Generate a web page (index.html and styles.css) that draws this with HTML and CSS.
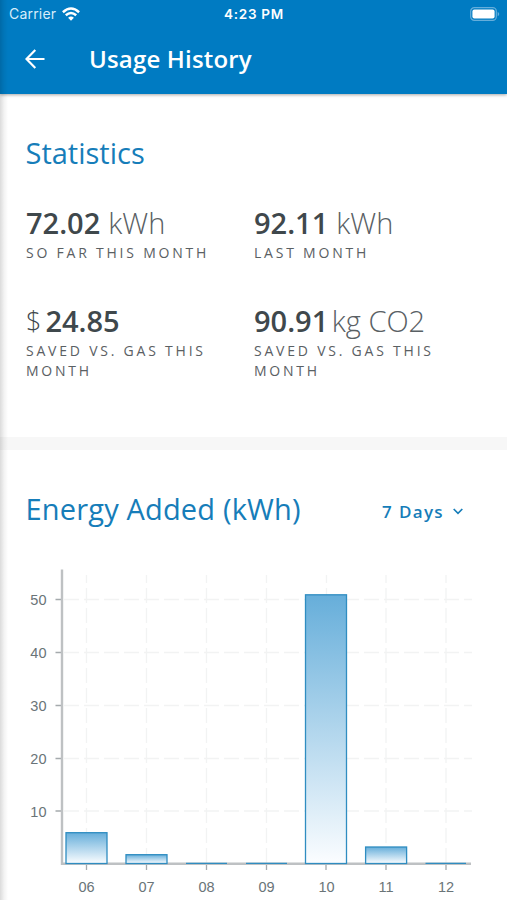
FILE: index.html
```
<!DOCTYPE html>
<html lang="en">
<head>
<meta charset="utf-8">
<title>Usage History</title>
<link rel="stylesheet" href="styles.css">
</head>
<body>
<div class="screen">
  <header class="header">
    <div class="status">
      <div class="carrier"><span>Carrier</span>
        <svg class="wifi" width="18" height="14" viewBox="0 0 18 14" fill="none" stroke="#fff" stroke-width="2.5"><path d="M.9 5.2Q9-2.1 17.1 5.2M3.8 8.3Q9 3.7 14.2 8.3"/><path d="M9 13.800 6.100 10.800Q9 8.400 11.900 10.800Z" fill="#fff" stroke="none"/></svg>
      </div>
      <span class="time">4:23 PM</span>
      <svg class="battery" width="30" height="14" viewBox="0 0 30 14"><rect x=".7" y=".7" width="25.600" height="12.600" rx="3.600" fill="none" stroke="#65aedb" stroke-width="1.200"/><rect x="2.400" y="2.400" width="22.200" height="9.200" rx="2" fill="#fff"/><path d="M27.700 4.700Q30.800 7 27.700 9.300Z" fill="#65aedb"/></svg>
    </div>
    <div class="appbar">
      <svg class="back" width="20" height="20" viewBox="0 0 20 20" fill="none" stroke="#fff" stroke-width="2.200"><path d="M19.500 10H1.800M10.300 1.100 1.500 10l8.800 8.900"/></svg>
      <h1>Usage History</h1>
    </div>
  </header>
  <main>
    <section class="stats">
      <h2>Statistics</h2>
      <div class="grid">
        <div class="stat"><p class="value"><b>72.02</b><span class="unit spaced">kWh</span></p><p class="label">SO FAR THIS MONTH</p></div>
        <div class="stat"><p class="value"><b>92.11</b><span class="unit spaced">kWh</span></p><p class="label">LAST MONTH</p></div>
        <div class="stat"><p class="value"><span class="currency">$</span><b>24.85</b></p><p class="label">SAVED VS. GAS THIS<br>MONTH</p></div>
        <div class="stat"><p class="value"><b>90.91</b><span class="unit">kg CO2</span></p><p class="label">SAVED VS. GAS THIS<br>MONTH</p></div>
      </div>
    </section>
    <section class="energy">
      <div class="energy-head">
        <h2>Energy Added (kWh)</h2>
        <div class="range"><span>7 Days</span><svg width="10" height="7" viewBox="0 0 10 7" fill="none" stroke="#167db9" stroke-width="1.700"><path d="M.7 1 5 5.300 9.300 1"/></svg></div>
      </div>
      <svg class="chart" width="507" height="350" viewBox="0 550 507 350">
        <defs><linearGradient id="bar" x1="0" y1="0" x2="0" y2="1"><stop offset="0" stop-color="#66aeda"/><stop offset="1" stop-color="#fbfdff"/></linearGradient></defs>
        <g class="gridlines">
          <path d="M64 599.500H472M64 652.500H472M64 705.500H472M64 758.500H472M64 811H472"/>
          <path d="M86.500 863V575M146.500 863V575M206.500 863V575M266.500 863V575M326.500 863V575M386 863V575M446 863V575"/>
        </g>
        <path class="ticks" d="M55.500 599.500H62M55.500 652.500H62M55.500 705.500H62M55.500 758.500H62M55.500 811H62M86.500 864V870M146.500 864V870M206.500 864V870M266.500 864V870M326 864V870M386 864V870M446 864V870"/>
        <path class="axis" d="M62 569.500V863.700H471"/>
        <g class="bars">
          <rect x="66" y="832.700" width="41" height="30.800"/>
          <rect x="126" y="854.700" width="41" height="8.800"/>
          <rect x="305.500" y="594.800" width="41" height="268.700"/>
          <rect x="365.600" y="847" width="41" height="16.500"/>
          <path d="M186 863.400H227M246 863.400H287M425.500 863.400H466"/>
        </g>
        <g class="y-labels"><text x="46.500" y="605">50</text><text x="46.500" y="658">40</text><text x="46.500" y="711">30</text><text x="46.500" y="763.500">20</text><text x="46.500" y="816.500">10</text></g>
        <g class="x-labels"><text x="86.500" y="892">06</text><text x="146.500" y="892">07</text><text x="206.500" y="892">08</text><text x="266.500" y="892">09</text><text x="326.500" y="892">10</text><text x="386" y="892">11</text><text x="446" y="892">12</text></g>
      </svg>
    </section>
  </main>
  <div class="edge-shadow"></div>
</div>
</body>
</html>
```
FILE: styles.css
```
* { box-sizing: border-box; }
body, h1, h2, p { margin: 0; }
body { background: #fff; font-family: "Open Sans", sans-serif; overflow: hidden; }
svg { display: block; flex: none; }
.screen { position: relative; width: 507px; height: 900px; overflow: hidden; }
.header { height: 94px; background: #007bc2; color: #fff; box-shadow: 0 1px 3px rgba(0,0,0,.35); position: relative; }
.status { height: 28px; display: grid; grid-template-columns: 1fr auto 1fr; align-items: center; padding: 0 7px 0 9px; font: 14px/28px Inter, sans-serif; }
.carrier { display: flex; gap: 6px; align-items: center; letter-spacing: .2px; }
.carrier span { color: #d7edfa; }
.time { font-weight: 600; font-size: 13.5px; letter-spacing: .7px; margin-left: -1px; }
.battery { justify-self: end; }
.appbar { display: flex; align-items: center; height: 62px; padding-left: 25px; gap: 44px; }
h1 { font-size: 24px; line-height: 32px; font-weight: 600; letter-spacing: .18px; }
h2 { color: #167db9; font-size: 29px; line-height: 40px; font-weight: 400; white-space: nowrap; margin-left: -.5px; }
.stats { height: 356px; padding: 39px 26px 0; border-bottom: 13px solid #f7f7f7; }
.grid { display: grid; grid-template-columns: 228px 228px; grid-auto-rows: 98px; margin-top: 30px; }
.value { display: flex; height: 40px; font-size: 29px; line-height: 40px; color: #3f484c; white-space: nowrap; }
.value b { font-weight: 600; }
.unit { font-weight: 300; color: #596064; margin-left: 3.5px; }
.spaced { margin-left: 8px; }
.currency { font-weight: 300; font-size: 27px; margin-right: 4px; }
.label { font-size: 14px; line-height: 20px; letter-spacing: 2.78px; color: #5a6063; white-space: nowrap; }
.energy-head { display: flex; height: 100px; padding: 39px 44px 0 26px; justify-content: space-between; }
.energy-head h2 { letter-spacing: .17px; }
.range { display: flex; align-items: center; gap: 9px; height: 44px; color: #167db9; font-size: 17px; font-weight: 600; letter-spacing: 1.35px; }
.gridlines { fill: none; stroke: #f2f3f3; stroke-width: 1.3; stroke-dasharray: 15 5; }
.ticks { fill: none; stroke: #a5aaad; stroke-width: 1.3; }
.axis { fill: none; stroke: #bec1c3; stroke-width: 2.4; }
.bars { fill: url(#bar); stroke: #2f8dc1; stroke-width: 1.3; }
.y-labels, .x-labels { font: 14.5px "Liberation Sans", sans-serif; fill: #6a7478; }
.y-labels { text-anchor: end; }
.x-labels { text-anchor: middle; }
.edge-shadow { position: absolute; left: 0; top: 0; width: 8px; height: 100%; background: linear-gradient(90deg, rgba(0,0,0,.14), rgba(0,0,0,.05) 50%, transparent); }
```
